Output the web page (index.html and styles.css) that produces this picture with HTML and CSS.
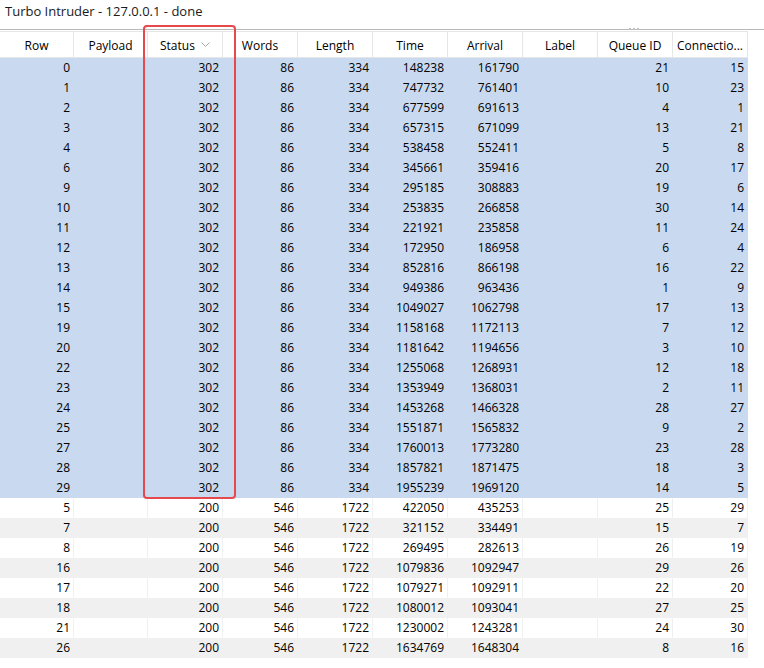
FILE: index.html
```html
<!DOCTYPE html>
<html>
<head>
<meta charset="utf-8">
<link rel="stylesheet" href="styles.css">
</head>
<body>
<div class="window">
  <div class="title">Turbo Intruder - 127.0.0.1 - done</div>
  <div class="splitter"><span class="grip"><i></i><i></i><i></i></span></div>
  <div class="table">
    <div class="row head">
      <div class="c">Row</div><div class="c">Payload</div><div class="c">Status <svg class="sort" width="9" height="6" viewBox="0 0 9 6"><polyline points="0.5,0.5 4.5,4.5 8.5,0.5" fill="none" stroke="#a8a8a8" stroke-width="1"/></svg></div><div class="c">Words</div><div class="c">Length</div><div class="c">Time</div><div class="c">Arrival</div><div class="c">Label</div><div class="c">Queue ID</div><div class="c">Connectio...</div>
    </div>
    <div class="row sel"><div class="c">0</div><div class="c"></div><div class="c">302</div><div class="c">86</div><div class="c">334</div><div class="c">148238</div><div class="c">161790</div><div class="c"></div><div class="c">21</div><div class="c">15</div></div>
    <div class="row sel"><div class="c">1</div><div class="c"></div><div class="c">302</div><div class="c">86</div><div class="c">334</div><div class="c">747732</div><div class="c">761401</div><div class="c"></div><div class="c">10</div><div class="c">23</div></div>
    <div class="row sel"><div class="c">2</div><div class="c"></div><div class="c">302</div><div class="c">86</div><div class="c">334</div><div class="c">677599</div><div class="c">691613</div><div class="c"></div><div class="c">4</div><div class="c">1</div></div>
    <div class="row sel"><div class="c">3</div><div class="c"></div><div class="c">302</div><div class="c">86</div><div class="c">334</div><div class="c">657315</div><div class="c">671099</div><div class="c"></div><div class="c">13</div><div class="c">21</div></div>
    <div class="row sel"><div class="c">4</div><div class="c"></div><div class="c">302</div><div class="c">86</div><div class="c">334</div><div class="c">538458</div><div class="c">552411</div><div class="c"></div><div class="c">5</div><div class="c">8</div></div>
    <div class="row sel"><div class="c">6</div><div class="c"></div><div class="c">302</div><div class="c">86</div><div class="c">334</div><div class="c">345661</div><div class="c">359416</div><div class="c"></div><div class="c">20</div><div class="c">17</div></div>
    <div class="row sel"><div class="c">9</div><div class="c"></div><div class="c">302</div><div class="c">86</div><div class="c">334</div><div class="c">295185</div><div class="c">308883</div><div class="c"></div><div class="c">19</div><div class="c">6</div></div>
    <div class="row sel"><div class="c">10</div><div class="c"></div><div class="c">302</div><div class="c">86</div><div class="c">334</div><div class="c">253835</div><div class="c">266858</div><div class="c"></div><div class="c">30</div><div class="c">14</div></div>
    <div class="row sel"><div class="c">11</div><div class="c"></div><div class="c">302</div><div class="c">86</div><div class="c">334</div><div class="c">221921</div><div class="c">235858</div><div class="c"></div><div class="c">11</div><div class="c">24</div></div>
    <div class="row sel"><div class="c">12</div><div class="c"></div><div class="c">302</div><div class="c">86</div><div class="c">334</div><div class="c">172950</div><div class="c">186958</div><div class="c"></div><div class="c">6</div><div class="c">4</div></div>
    <div class="row sel"><div class="c">13</div><div class="c"></div><div class="c">302</div><div class="c">86</div><div class="c">334</div><div class="c">852816</div><div class="c">866198</div><div class="c"></div><div class="c">16</div><div class="c">22</div></div>
    <div class="row sel"><div class="c">14</div><div class="c"></div><div class="c">302</div><div class="c">86</div><div class="c">334</div><div class="c">949386</div><div class="c">963436</div><div class="c"></div><div class="c">1</div><div class="c">9</div></div>
    <div class="row sel"><div class="c">15</div><div class="c"></div><div class="c">302</div><div class="c">86</div><div class="c">334</div><div class="c">1049027</div><div class="c">1062798</div><div class="c"></div><div class="c">17</div><div class="c">13</div></div>
    <div class="row sel"><div class="c">19</div><div class="c"></div><div class="c">302</div><div class="c">86</div><div class="c">334</div><div class="c">1158168</div><div class="c">1172113</div><div class="c"></div><div class="c">7</div><div class="c">12</div></div>
    <div class="row sel"><div class="c">20</div><div class="c"></div><div class="c">302</div><div class="c">86</div><div class="c">334</div><div class="c">1181642</div><div class="c">1194656</div><div class="c"></div><div class="c">3</div><div class="c">10</div></div>
    <div class="row sel"><div class="c">22</div><div class="c"></div><div class="c">302</div><div class="c">86</div><div class="c">334</div><div class="c">1255068</div><div class="c">1268931</div><div class="c"></div><div class="c">12</div><div class="c">18</div></div>
    <div class="row sel"><div class="c">23</div><div class="c"></div><div class="c">302</div><div class="c">86</div><div class="c">334</div><div class="c">1353949</div><div class="c">1368031</div><div class="c"></div><div class="c">2</div><div class="c">11</div></div>
    <div class="row sel"><div class="c">24</div><div class="c"></div><div class="c">302</div><div class="c">86</div><div class="c">334</div><div class="c">1453268</div><div class="c">1466328</div><div class="c"></div><div class="c">28</div><div class="c">27</div></div>
    <div class="row sel"><div class="c">25</div><div class="c"></div><div class="c">302</div><div class="c">86</div><div class="c">334</div><div class="c">1551871</div><div class="c">1565832</div><div class="c"></div><div class="c">9</div><div class="c">2</div></div>
    <div class="row sel"><div class="c">27</div><div class="c"></div><div class="c">302</div><div class="c">86</div><div class="c">334</div><div class="c">1760013</div><div class="c">1773280</div><div class="c"></div><div class="c">23</div><div class="c">28</div></div>
    <div class="row sel"><div class="c">28</div><div class="c"></div><div class="c">302</div><div class="c">86</div><div class="c">334</div><div class="c">1857821</div><div class="c">1871475</div><div class="c"></div><div class="c">18</div><div class="c">3</div></div>
    <div class="row sel"><div class="c">29</div><div class="c"></div><div class="c">302</div><div class="c">86</div><div class="c">334</div><div class="c">1955239</div><div class="c">1969120</div><div class="c"></div><div class="c">14</div><div class="c">5</div></div>
    <div class="row"><div class="c">5</div><div class="c"></div><div class="c">200</div><div class="c">546</div><div class="c">1722</div><div class="c">422050</div><div class="c">435253</div><div class="c"></div><div class="c">25</div><div class="c">29</div></div>
    <div class="row alt"><div class="c">7</div><div class="c"></div><div class="c">200</div><div class="c">546</div><div class="c">1722</div><div class="c">321152</div><div class="c">334491</div><div class="c"></div><div class="c">15</div><div class="c">7</div></div>
    <div class="row"><div class="c">8</div><div class="c"></div><div class="c">200</div><div class="c">546</div><div class="c">1722</div><div class="c">269495</div><div class="c">282613</div><div class="c"></div><div class="c">26</div><div class="c">19</div></div>
    <div class="row alt"><div class="c">16</div><div class="c"></div><div class="c">200</div><div class="c">546</div><div class="c">1722</div><div class="c">1079836</div><div class="c">1092947</div><div class="c"></div><div class="c">29</div><div class="c">26</div></div>
    <div class="row"><div class="c">17</div><div class="c"></div><div class="c">200</div><div class="c">546</div><div class="c">1722</div><div class="c">1079271</div><div class="c">1092911</div><div class="c"></div><div class="c">22</div><div class="c">20</div></div>
    <div class="row alt"><div class="c">18</div><div class="c"></div><div class="c">200</div><div class="c">546</div><div class="c">1722</div><div class="c">1080012</div><div class="c">1093041</div><div class="c"></div><div class="c">27</div><div class="c">25</div></div>
    <div class="row"><div class="c">21</div><div class="c"></div><div class="c">200</div><div class="c">546</div><div class="c">1722</div><div class="c">1230002</div><div class="c">1243281</div><div class="c"></div><div class="c">24</div><div class="c">30</div></div>
    <div class="row alt"><div class="c">26</div><div class="c"></div><div class="c">200</div><div class="c">546</div><div class="c">1722</div><div class="c">1634769</div><div class="c">1648304</div><div class="c"></div><div class="c">8</div><div class="c">16</div></div>
    <div class="highlight"></div>
  </div>
</div>
</body>
</html>
```

FILE: styles.css
```css
html, body {
  margin: 0;
  padding: 0;
  background: #ffffff;
}
body {
  font-family: "Open Sans", "Noto Sans", sans-serif;
  color: #000000;
  width: 764px;
  height: 668px;
  overflow: hidden;
}
.window {
  position: relative;
}
.title {
  height: 29px;
  line-height: 22px;
  padding-left: 5px;
  font-size: 13px;
  color: #1a1a1a;
  box-sizing: border-box;
}
.splitter {
  position: relative;
  height: 2px;
  border-top: 1px solid #b9b9b9;
  box-sizing: border-box;
}
.grip {
  position: absolute;
  left: 629px;
  top: -2px;
  display: flex;
  gap: 2px;
}
.grip i {
  display: block;
  width: 2px;
  height: 2px;
  background: #c0c0c0;
}
.table {
  position: relative;
  width: 748px;
  font-size: 12px;
}
.row {
  display: grid;
  grid-template-columns: 74px 74px repeat(8, 75px);
  height: 20px;
  background: #ffffff;
}
.row .c {
  box-sizing: border-box;
  border-right: 1px solid #f0f0f0;
  text-align: right;
  padding-right: 3px;
  line-height: 20px;
  white-space: nowrap;
  overflow: hidden;
}
.row.alt {
  background: #f0f0f0;
}
.row.sel {
  background: #c9d9f0;
}
.row.sel .c {
  border-right-color: #c9d9f0;
}
.row.head {
  height: 27px;
  border-top: 1px solid #e6e6e6;
  border-bottom: 1px solid #e6e6e6;
  box-sizing: border-box;
}
.row.head .c {
  text-align: center;
  padding-right: 0;
  padding-top: 2px;
  line-height: 23px;
  border-right-color: #e6e6e6;
}
.sort {
  margin-left: 3px;
  vertical-align: 2px;
}
.highlight {
  position: absolute;
  left: 143px;
  top: -6px;
  width: 93px;
  height: 474px;
  border: 2px solid #e5484d;
  border-radius: 4px;
  box-sizing: border-box;
  pointer-events: none;
}
```
